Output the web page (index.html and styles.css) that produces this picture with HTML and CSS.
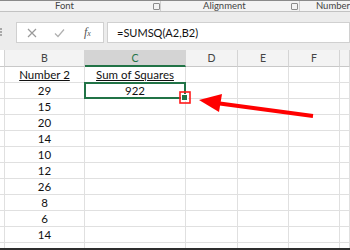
FILE: index.html
```html
<html>
	<head>
		<meta charset="utf-8" />
		<title>SUMSQ</title>
		<link rel="stylesheet" href="styles.css">
	</head>
	<body>
		<div class="ribbon">
			<div class="group group-font">
				<span class="label">Font</span>
				<span class="launcher"></span>
			</div>
			<div class="group group-align">
				<span class="label">Alignment</span>
				<span class="launcher"></span>
			</div>
			<div class="group group-number">
				<span class="label">Number</span>
			</div>
		</div>

		<div class="formula-bar">
			<div class="handle"></div>
			<div class="fbox buttons">
				<svg class="ico" width="10" height="10" viewBox="0 0 10 10"><path d="M1 1L9 9M9 1L1 9" stroke="#9a9a9a" stroke-width="1.2" fill="none"/></svg>
				<svg class="ico" width="11" height="10" viewBox="0 0 11 10"><path d="M1 5.5L4 8.5L10 1.5" stroke="#b0b0b0" stroke-width="1.2" fill="none"/></svg>
				<span class="fx">f<sub>x</sub></span>
			</div>
			<div class="fbox formula">=SUMSQ(A2,B2)</div>
		</div>

		<div class="sheet">
			<div class="hd"></div><div class="hd">B</div><div class="hd sel">C</div><div class="hd">D</div><div class="hd">E</div><div class="hd">F</div><div class="hd"></div>

			<div class="c"></div><div class="c t"><u>Number 2</u></div><div class="c t"><u>Sum of Squares</u></div><div class="c"></div><div class="c"></div><div class="c"></div><div class="c"></div>
			<div class="c"></div><div class="c t">29</div><div class="c t active">922<span class="handle-fill"></span></div><div class="c"></div><div class="c"></div><div class="c"></div><div class="c"></div>
			<div class="c"></div><div class="c t">15</div><div class="c"></div><div class="c"></div><div class="c"></div><div class="c"></div><div class="c"></div>
			<div class="c"></div><div class="c t">20</div><div class="c"></div><div class="c"></div><div class="c"></div><div class="c"></div><div class="c"></div>
			<div class="c"></div><div class="c t">14</div><div class="c"></div><div class="c"></div><div class="c"></div><div class="c"></div><div class="c"></div>
			<div class="c"></div><div class="c t">10</div><div class="c"></div><div class="c"></div><div class="c"></div><div class="c"></div><div class="c"></div>
			<div class="c"></div><div class="c t">12</div><div class="c"></div><div class="c"></div><div class="c"></div><div class="c"></div><div class="c"></div>
			<div class="c"></div><div class="c t">26</div><div class="c"></div><div class="c"></div><div class="c"></div><div class="c"></div><div class="c"></div>
			<div class="c"></div><div class="c t">8</div><div class="c"></div><div class="c"></div><div class="c"></div><div class="c"></div><div class="c"></div>
			<div class="c"></div><div class="c t">6</div><div class="c"></div><div class="c"></div><div class="c"></div><div class="c"></div><div class="c"></div>
			<div class="c"></div><div class="c t">14</div><div class="c"></div><div class="c"></div><div class="c"></div><div class="c"></div><div class="c"></div>
			<div class="c"></div><div class="c"></div><div class="c"></div><div class="c"></div><div class="c"></div><div class="c"></div><div class="c"></div>
		</div>
		<div class="status"></div>

		<!-- annotation over the sheet -->
		<svg class="arrow" width="350" height="250" viewBox="0 0 350 250">
			<rect x="180" y="92" width="10" height="11" fill="none" stroke="#ff1a1a" stroke-width="1.6"/>
			<line x1="313" y1="116" x2="216" y2="103" stroke="#ff0000" stroke-width="4"/>
			<polygon points="199,100 222,94 219,112" fill="#ff0000"/>
		</svg>
	</body>
</html>
```

FILE: styles.css
```css
body{
	margin: 0;
	width: 350px;
	height: 250px;
	overflow: hidden;
	position: relative;
	background: #ffffff;
	font-family: Lato, "Liberation Sans", sans-serif;
}

/* ribbon group labels */
.ribbon{
	display: flex;
	height: 10px;
	background: #f3f3f3;
	border-top: 1px solid #8a8a8a;
	border-bottom: 1px solid #c2c2c2;
	font-size: 9.5px;
	line-height: 10px;
	color: #444;
}
.group{
	display: flex;
	align-items: center;
	border-right: 1px solid #cfcfcf;
	box-sizing: border-box;
}
.group-font{
	width: 162px;
}
.group-font .label{
	margin-left: 55px;
	width: 98px;
}
.group-align{
	width: 141px;
}
.group-align .label{
	margin-left: 42px;
	width: 88px;
}
.group-number{
	border-right: none;
}
.group-number .label{
	margin-left: 16px;
}
.launcher{
	width: 5px;
	height: 5px;
	border: 1px solid #8c8c8c;
	border-radius: 1px;
}

/* formula bar */
.formula-bar{
	display: flex;
	height: 38px;
	box-sizing: border-box;
	padding-top: 10px;
	background: #ececec;
}
.handle{
	width: 2px;
	height: 8px;
	margin-top: 6px;
	margin-right: 12px;
	border-left: 2px dotted #a8a8a8;
}
.fbox{
	height: 21px;
	box-sizing: border-box;
	background: #ffffff;
	border: 1px solid #d0d0d0;
}
.buttons{
	width: 88px;
	display: flex;
	align-items: center;
	padding-left: 10px;
	gap: 17px;
}
.fx{
	font-family: "Liberation Serif", serif;
	font-style: italic;
	font-size: 12px;
	color: #555;
	margin-left: 2px;
}
.fx sub{
	font-size: 8px;
	vertical-align: 0;
}
.formula{
	flex: 1;
	margin-left: 3px;
	padding-left: 9px;
	font-size: 11px;
	line-height: 19px;
	color: #111;
}

/* grid */
.sheet{
	display: grid;
	grid-template-columns: 5px 80px 101px 52px 51px 51px 1fr;
	grid-template-rows: 17px;
	grid-auto-rows: 16px;
	height: 198px;
	overflow: hidden;
	font-size: 11.5px;
	color: #111;
}
.hd,.c{
	box-sizing: border-box;
	border-right: 1px solid #e0e0e0;
	border-bottom: 1px solid #e0e0e0;
	text-align: center;
}
.hd{
	background: #f3f3f3;
	border-right-color: #d4d4d4;
	border-bottom-color: #c8c8c8;
	font-size: 10.5px;
	line-height: 16px;
	color: #444;
}
.hd:first-child{
	background: #ffffff;
}
.hd.sel{
	background: #d4d4d4;
	color: #217346;
	border-bottom: 2px solid #217346;
}
.c{
	line-height: 15px;
}
.active{
	position: relative;
}
.active::after{
	content: "";
	position: absolute;
	top: -1px;
	left: -1px;
	right: -1px;
	bottom: -1px;
	border: 2px solid #217346;
}
.handle-fill{
	position: absolute;
	right: -3px;
	bottom: -3px;
	width: 5px;
	height: 5px;
	background: #217346;
	border: 1px solid #ffffff;
	z-index: 1;
}
.status{
	height: 2px;
	background: #2e2e2e;
}
.arrow{
	position: absolute;
	left: 0;
	top: 0;
}
```
